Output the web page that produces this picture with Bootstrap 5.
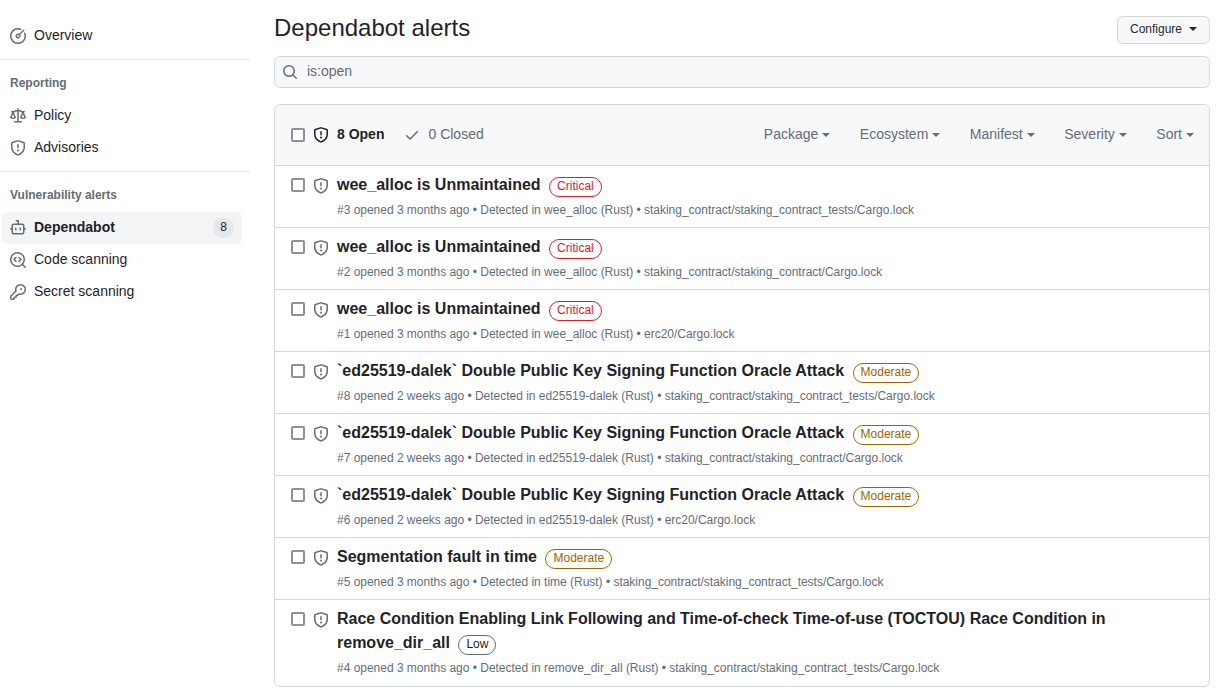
<!DOCTYPE html>
<html lang="en">
<head>
<meta charset="utf-8">
<meta name="viewport" content="width=device-width, initial-scale=1">
<title>Dependabot alerts</title>
<link href="https://cdn.jsdelivr.net/npm/bootstrap@5.3.0/dist/css/bootstrap.min.css" rel="stylesheet">
<style>
body{font-family:"Liberation Sans",Arial,sans-serif;font-size:14px;line-height:20px;color:#1f2328;background:#fff;overflow:hidden}
.oct{width:16px;height:16px;fill:currentColor;flex:none;display:block}
.c-muted{color:#656d76}
.side{width:250px;padding-top:20px;flex:none}
.side-link{height:32px;margin:0 8px 0 2px;padding:6px 8px;border-radius:6px;gap:8px;color:#1f2328;text-decoration:none}
.side-link .oct{color:#656d76}
.side-link.active{background:#f3f4f6;font-weight:700}
.side-link span{line-height:18px;padding-bottom:2px}
.side-link .count{width:21px;height:20px;padding:0;border-radius:10px;background:#e4e7ec;font-size:12px;font-weight:400;text-align:center;margin-left:auto}
.side-rule{height:1px;background:#e6e9ec;margin-top:7px}
.side-head{font-size:12px;font-weight:700;line-height:18px;padding:14px 10px 8px;color:#656d76}
.main{width:936px;margin-left:24px;padding-top:10px;flex:none}
.page-title{font-size:24px;line-height:36px;font-weight:400;margin:0}
.btn-conf{height:28px;width:93px;padding:0 12px 2px;border:1px solid #d5d8da;border-radius:6px;background:#f6f8fa;color:#24292f;font-size:12px;line-height:24px;margin-top:6px}
.caret{border:4px solid transparent;border-top-color:currentColor;border-bottom:0;width:0;height:0;flex:none}
.search{height:32px;border:1px solid #d0d7de;border-radius:6px;background:#f6f8fa;padding:0 7px;margin-top:10px;color:#656d76;gap:9px}
.search span{padding-bottom:2px}
.list{border:1px solid #d0d7de;border-radius:6px;margin-top:16px;overflow:hidden}
.list-top{height:60px;background:#f6f8fa;padding:0 15px 0 16px}
.list-top b,.list-top span,.filters{padding-bottom:2px}
.done{margin-left:20px;margin-right:8px}
.box{appearance:none;width:14px;height:14px;border:2px solid #8f8f9d;border-radius:2px;background:#fff;margin:0;flex:none;display:block}
.filters{gap:29.5px}
.filters a{color:#656d76;text-decoration:none;gap:4px}
.filters .caret{margin-top:2px}
.row-item{border-top:1px solid #d0d7de;padding:7px 16px 8px}
.row-item:last-child{padding-bottom:9px}
.row-item .box{margin-top:5px}
.row-item .oct{margin:5px 8px 0 8px;color:#656d76}
.alert-name{font-size:16px;line-height:24px;font-weight:700;margin:0;max-width:800px}
.tag{display:inline-block;font-size:12px;font-weight:400;line-height:16px;height:20px;padding:0 7px;border:1px solid;border-radius:10px;margin:-4px 0 -4px 4px;vertical-align:0}
.critical{color:#cf222e}.moderate{color:#9a6700}.low{border-color:#656d76}
.meta{font-size:12px;line-height:18px;color:#656d76;margin-top:4px;letter-spacing:-.016px}
</style>
</head>
<body>
<svg class="d-none" xmlns="http://www.w3.org/2000/svg">
<symbol id="shield" viewBox="0 0 16 16"><path d="M7.467.133a1.748 1.748 0 0 1 1.066 0l5.25 1.68A1.75 1.75 0 0 1 15 3.48V7c0 1.566-.32 3.182-1.303 4.682-.983 1.498-2.585 2.813-5.032 3.855a1.697 1.697 0 0 1-1.33 0c-2.447-1.042-4.049-2.357-5.032-3.855C1.32 10.182 1 8.566 1 7V3.48a1.75 1.75 0 0 1 1.217-1.667Zm.61 1.429a.25.25 0 0 0-.153 0l-5.25 1.68a.25.25 0 0 0-.174.238V7c0 1.358.275 2.666 1.057 3.86.784 1.194 2.121 2.34 4.366 3.297a.196.196 0 0 0 .154 0c2.245-.956 3.582-2.104 4.366-3.298C13.225 9.666 13.5 8.36 13.5 7V3.48a.251.251 0 0 0-.174-.237l-5.25-1.68ZM8.75 4.75v3a.75.75 0 0 1-1.5 0v-3a.75.75 0 0 1 1.5 0ZM9 10.5a1 1 0 1 1-2 0 1 1 0 0 1 2 0Z"/></symbol>
<symbol id="meter" viewBox="0 0 16 16"><path d="M8 1.5a6.5 6.5 0 1 0 6.016 4.035.75.75 0 0 1 1.388-.57 8 8 0 1 1-4.37-4.37.75.75 0 0 1-.569 1.389A6.479 6.479 0 0 0 8 1.5Zm6.28.22a.75.75 0 0 1 0 1.06l-4.063 4.064a2.5 2.5 0 1 1-1.06-1.06L13.22 1.72a.75.75 0 0 1 1.06 0ZM7 8a1 1 0 1 0 2 0 1 1 0 0 0-2 0Z"/></symbol>
<symbol id="law" viewBox="0 0 16 16"><path d="M8.75.75V2h.985c.304 0 .603.08.867.231l1.29.736c.038.022.08.033.124.033h2.234a.75.75 0 0 1 0 1.5h-.427l2.111 4.692a.75.75 0 0 1-.154.838l-.53-.53.529.531-.001.002-.002.002-.006.006-.006.005-.01.01-.045.04c-.21.176-.441.327-.686.45C14.556 10.78 13.88 11 13 11a4.498 4.498 0 0 1-2.023-.454 3.544 3.544 0 0 1-.686-.45l-.045-.04-.016-.015-.006-.006-.004-.004v-.001a.75.75 0 0 1-.154-.838L12.178 4.5h-.162c-.305 0-.604-.079-.868-.231l-1.29-.736a.245.245 0 0 0-.124-.033H8.75V13h2.5a.75.75 0 0 1 0 1.5h-6.5a.75.75 0 0 1 0-1.5h2.5V3.5h-.984a.245.245 0 0 0-.124.033l-1.289.737c-.265.15-.564.23-.869.23h-.162l2.112 4.692a.75.75 0 0 1-.154.838l-.53-.53.529.531-.001.002-.002.002-.006.006-.016.015-.045.04c-.21.176-.441.327-.686.45C4.556 10.78 3.88 11 3 11a4.498 4.498 0 0 1-2.023-.454 3.544 3.544 0 0 1-.686-.45l-.045-.04-.016-.015-.006-.006-.004-.004v-.001a.75.75 0 0 1-.154-.838L2.178 4.5H1.75a.75.75 0 0 1 0-1.5h2.234a.249.249 0 0 0 .125-.033l1.288-.737c.265-.15.564-.23.869-.23h.984V.75a.75.75 0 0 1 1.5 0Zm2.945 8.477c.285.135.718.273 1.305.273s1.02-.138 1.305-.273L13 6.327Zm-10 0c.285.135.718.273 1.305.273s1.02-.138 1.305-.273L3 6.327Z"/></symbol>
<symbol id="bot" viewBox="0 0 16 16"><path d="M5.75 7.5a.75.75 0 0 1 .75.75v1.5a.75.75 0 0 1-1.5 0v-1.5a.75.75 0 0 1 .75-.75Zm5.25.75a.75.75 0 0 0-1.5 0v1.5a.75.75 0 0 0 1.5 0v-1.5Z"/><path d="M6.25 0h2A.75.75 0 0 1 9 .75V3.5h3.25a2.25 2.25 0 0 1 2.25 2.25V8h.75a.75.75 0 0 1 0 1.5h-.75v2.75a2.25 2.25 0 0 1-2.25 2.25h-8.5a2.25 2.25 0 0 1-2.25-2.25V9.5H.75a.75.75 0 0 1 0-1.5h.75V5.75A2.25 2.25 0 0 1 3.75 3.5H7.5v-2H6.25a.75.75 0 0 1 0-1.5ZM3 5.75v6.5c0 .414.336.75.75.75h8.5a.75.75 0 0 0 .75-.75v-6.5a.75.75 0 0 0-.75-.75h-8.5a.75.75 0 0 0-.75.75Z"/></symbol>
<symbol id="codescan" viewBox="0 0 16 16"><path d="M8.47 4.97a.75.75 0 0 0 0 1.06L9.94 7.5 8.47 8.97a.75.75 0 1 0 1.06 1.06l2-2a.75.75 0 0 0 0-1.06l-2-2a.75.75 0 0 0-1.06 0ZM6.53 6.03a.75.75 0 0 0-1.06-1.06l-2 2a.75.75 0 0 0 0 1.06l2 2a.75.75 0 1 0 1.06-1.06L5.06 7.5l1.47-1.47Z"/><path d="M12.246 13.307a7.501 7.501 0 1 1 1.06-1.06l2.474 2.473a.75.75 0 1 1-1.06 1.06l-2.474-2.473ZM1.5 7.5a6.002 6.002 0 0 0 3.608 5.504 6.002 6.002 0 0 0 6.486-1.117.748.748 0 0 1 .292-.293A6 6 0 1 0 1.5 7.5Z"/></symbol>
<symbol id="key" viewBox="0 0 16 16"><path d="M10.5 0a5.499 5.499 0 1 1-1.288 10.848l-.932.932a.749.749 0 0 1-.53.22H7v.75a.749.749 0 0 1-.22.53l-.5.5a.749.749 0 0 1-.53.22H5v.75a.749.749 0 0 1-.22.53l-.5.5a.749.749 0 0 1-.53.22h-2A1.75 1.75 0 0 1 0 14.25v-2c0-.199.079-.389.22-.53l4.932-4.932A5.5 5.5 0 0 1 10.5 0Zm-4 5.5c-.001.431.069.86.205 1.269a.75.75 0 0 1-.181.768L1.5 12.56v1.69c0 .138.112.25.25.25h1.69l.06-.06v-1.19a.75.75 0 0 1 .75-.75h1.19l.06-.06v-1.19a.75.75 0 0 1 .75-.75h1.19l1.023-1.025a.75.75 0 0 1 .768-.18A4 4 0 1 0 6.5 5.5ZM11 6a1 1 0 1 1 0-2 1 1 0 0 1 0 2Z"/></symbol>
<symbol id="search" viewBox="0 0 16 16"><path d="M10.68 11.74a6 6 0 0 1-7.922-8.982 6 6 0 0 1 8.982 7.922l3.04 3.04a.749.749 0 0 1-.326 1.275.749.749 0 0 1-.734-.215ZM11.5 7a4.499 4.499 0 1 0-8.997 0A4.499 4.499 0 0 0 11.5 7Z"/></symbol>
<symbol id="check" viewBox="0 0 16 16"><path d="M13.78 4.22a.75.75 0 0 1 0 1.06l-7.25 7.25a.75.75 0 0 1-1.06 0L2.22 9.28a.751.751 0 0 1 .018-1.042.751.751 0 0 1 1.042-.018L6 10.94l6.72-6.72a.75.75 0 0 1 1.06 0Z"/></symbol>
</svg>
<div class="d-flex">
<nav class="side">
  <a class="side-link d-flex align-items-center" href="#"><svg class="oct"><use href="#meter"/></svg><span>Overview</span></a>
  <div class="side-rule"></div>
  <div class="side-head">Reporting</div>
  <a class="side-link d-flex align-items-center" href="#"><svg class="oct"><use href="#law"/></svg><span>Policy</span></a>
  <a class="side-link d-flex align-items-center" href="#"><svg class="oct"><use href="#shield"/></svg><span>Advisories</span></a>
  <div class="side-rule"></div>
  <div class="side-head">Vulnerability alerts</div>
  <a class="side-link active d-flex align-items-center" href="#"><svg class="oct"><use href="#bot"/></svg><span>Dependabot</span><span class="count">8</span></a>
  <a class="side-link d-flex align-items-center" href="#"><svg class="oct"><use href="#codescan"/></svg><span>Code scanning</span></a>
  <a class="side-link d-flex align-items-center" href="#"><svg class="oct"><use href="#key"/></svg><span>Secret scanning</span></a>
</nav>
<main class="main">
  <div class="d-flex justify-content-between">
    <h1 class="page-title">Dependabot alerts</h1>
    <button class="btn-conf d-flex align-items-center justify-content-between" type="button">Configure<i class="caret"></i></button>
  </div>
  <div class="search d-flex align-items-center"><svg class="oct"><use href="#search"/></svg><span>is:open</span></div>
  <div class="list">
    <div class="list-top d-flex align-items-center">
      <input class="box" type="checkbox" aria-label="Select all">
      <svg class="oct ms-2 me-2"><use href="#shield"/></svg><b>8 Open</b>
      <svg class="oct c-muted done"><use href="#check"/></svg><span class="c-muted">0 Closed</span>
      <div class="filters d-flex ms-auto">
        <a class="d-flex align-items-center" href="#">Package<i class="caret"></i></a>
        <a class="d-flex align-items-center" href="#">Ecosystem<i class="caret"></i></a>
        <a class="d-flex align-items-center" href="#">Manifest<i class="caret"></i></a>
        <a class="d-flex align-items-center" href="#">Severity<i class="caret"></i></a>
        <a class="d-flex align-items-center" href="#">Sort<i class="caret"></i></a>
      </div>
    </div>
    <div class="row-item d-flex"><input class="box" type="checkbox"><svg class="oct"><use href="#shield"/></svg><div><h2 class="alert-name">wee_alloc is Unmaintained <span class="tag critical">Critical</span></h2><div class="meta">#3 opened 3 months ago • Detected in wee_alloc (Rust) • staking_contract/staking_contract_tests/Cargo.lock</div></div></div>
    <div class="row-item d-flex"><input class="box" type="checkbox"><svg class="oct"><use href="#shield"/></svg><div><h2 class="alert-name">wee_alloc is Unmaintained <span class="tag critical">Critical</span></h2><div class="meta">#2 opened 3 months ago • Detected in wee_alloc (Rust) • staking_contract/staking_contract/Cargo.lock</div></div></div>
    <div class="row-item d-flex"><input class="box" type="checkbox"><svg class="oct"><use href="#shield"/></svg><div><h2 class="alert-name">wee_alloc is Unmaintained <span class="tag critical">Critical</span></h2><div class="meta">#1 opened 3 months ago • Detected in wee_alloc (Rust) • erc20/Cargo.lock</div></div></div>
    <div class="row-item d-flex"><input class="box" type="checkbox"><svg class="oct"><use href="#shield"/></svg><div><h2 class="alert-name">`ed25519-dalek` Double Public Key Signing Function Oracle Attack <span class="tag moderate">Moderate</span></h2><div class="meta">#8 opened 2 weeks ago • Detected in ed25519-dalek (Rust) • staking_contract/staking_contract_tests/Cargo.lock</div></div></div>
    <div class="row-item d-flex"><input class="box" type="checkbox"><svg class="oct"><use href="#shield"/></svg><div><h2 class="alert-name">`ed25519-dalek` Double Public Key Signing Function Oracle Attack <span class="tag moderate">Moderate</span></h2><div class="meta">#7 opened 2 weeks ago • Detected in ed25519-dalek (Rust) • staking_contract/staking_contract/Cargo.lock</div></div></div>
    <div class="row-item d-flex"><input class="box" type="checkbox"><svg class="oct"><use href="#shield"/></svg><div><h2 class="alert-name">`ed25519-dalek` Double Public Key Signing Function Oracle Attack <span class="tag moderate">Moderate</span></h2><div class="meta">#6 opened 2 weeks ago • Detected in ed25519-dalek (Rust) • erc20/Cargo.lock</div></div></div>
    <div class="row-item d-flex"><input class="box" type="checkbox"><svg class="oct"><use href="#shield"/></svg><div><h2 class="alert-name">Segmentation fault in time <span class="tag moderate">Moderate</span></h2><div class="meta">#5 opened 3 months ago • Detected in time (Rust) • staking_contract/staking_contract_tests/Cargo.lock</div></div></div>
    <div class="row-item d-flex"><input class="box" type="checkbox"><svg class="oct"><use href="#shield"/></svg><div><h2 class="alert-name">Race Condition Enabling Link Following and Time-of-check Time-of-use (TOCTOU) Race Condition in remove_dir_all <span class="tag low">Low</span></h2><div class="meta">#4 opened 3 months ago • Detected in remove_dir_all (Rust) • staking_contract/staking_contract_tests/Cargo.lock</div></div></div>
  </div>
</main>
</div>
<script src="https://cdn.jsdelivr.net/npm/bootstrap@5.3.0/dist/js/bootstrap.bundle.min.js"></script>
</body>
</html>
